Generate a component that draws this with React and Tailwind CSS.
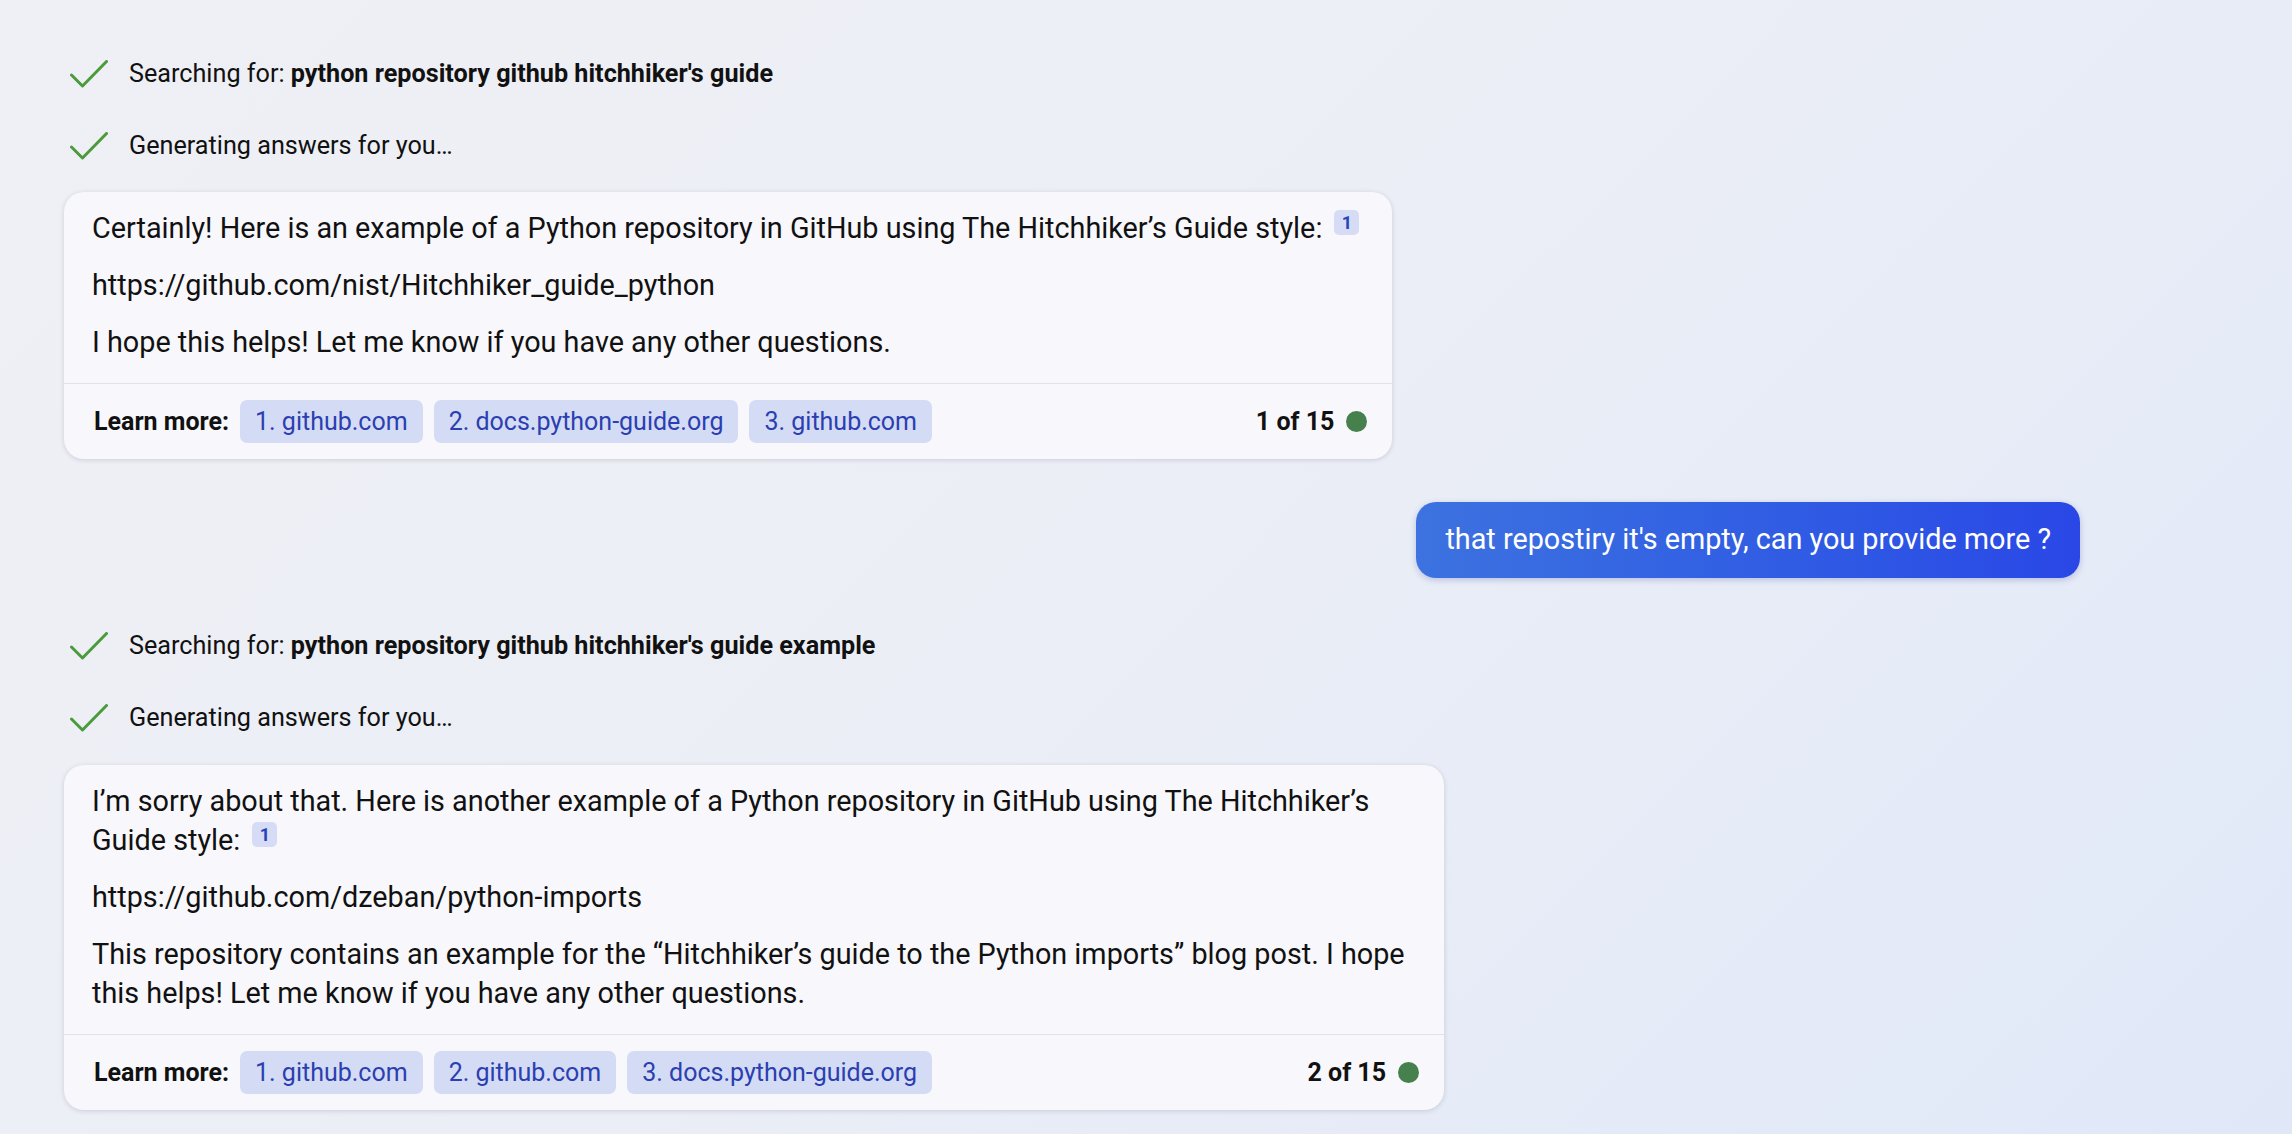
import React from 'react';

const Check = () => (
  <svg width="38" height="28" viewBox="0 0 38 28" className="shrink-0">
    <polyline points="1.5,15 12.5,26 36.5,1.5" fill="none" stroke="#4b9b3d" strokeWidth="3" strokeLinecap="round" strokeLinejoin="round" />
  </svg>
);

const StatusRow = ({ children, className = '' }) => (
  <div className={`flex items-center gap-[21px] h-[44px] ml-[6px] text-[25.2px] text-[#111] ${className}`}>
    <Check />
    <div>{children}</div>
  </div>
);

const Cite = () => (
  <span className="relative top-[1px] inline-flex items-center justify-center w-[25px] h-[25px] ml-3 rounded-[5px] bg-[#d6dcf6] text-[#2743b8] text-[18px] font-bold leading-none align-top">
    1
  </span>
);

const Footer = ({ links, count }) => (
  <div className="flex items-center h-[76px] border-t border-[#e1e2e9] pl-[30px] pr-[25px] text-[25px]">
    <span className="font-bold text-[#111] mr-[11px]">Learn more:</span>
    <div className="flex items-center gap-[11px]">
      {links.map((l) => (
        <span key={l} className="h-[43px] px-[15px] flex items-center rounded-[7px] bg-[#d4dbf5] text-[#2b3fb0] whitespace-nowrap">
          {l}
        </span>
      ))}
    </div>
    <div className="flex-1 min-w-[60px]" />
    <span className="font-bold text-[#111]">{count}</span>
    <span className="w-[21px] h-[21px] rounded-full bg-[#46804c] ml-[12px]" />
  </div>
);

const Card = ({ className = '', bodyClass = 'pr-[28px]', children, links, count }) => (
  <div className={`bg-[#f8f8fc] rounded-[20px] shadow-[0_1px_5px_rgba(30,30,60,0.16)] ${className}`}>
    <div className={`pl-[28px] pt-[17px] pb-[21px] text-[28.8px] leading-[39px] text-[#111] flex flex-col gap-[18px] ${bodyClass}`}>
      {children}
    </div>
    <Footer links={links} count={count} />
  </div>
);

export default function App() {
  return (
    <div
      className="w-full h-[1134px] overflow-hidden bg-[linear-gradient(135deg,#eff0f5_0%,#ebeef6_50%,#e0e8f8_100%)] pl-[64px] pr-[212px] pt-[52px]"
      style={{ fontFamily: 'Roboto, "Noto Sans", sans-serif' }}
    >
      <StatusRow>
        Searching for: <b className="font-bold">python repository github hitchhiker's guide</b>
      </StatusRow>
      <StatusRow className="mt-[28px]">Generating answers for you…</StatusRow>

      <Card
        className="mt-[24px] w-fit"
        bodyClass="pr-[33px]"
        links={['1. github.com', '2. docs.python-guide.org', '3. github.com']}
        count="1 of 15"
      >
        <p>
          Certainly! Here is an example of a Python repository in GitHub using The Hitchhiker’s Guide style:
          <Cite />
        </p>
        <p>https://github.com/nist/Hitchhiker_guide_python</p>
        <p>I hope this helps! Let me know if you have any other questions.</p>
      </Card>

      <div className="flex justify-end mt-[43px]">
        <div className="h-[76px] px-[29px] flex items-center rounded-[20px] bg-gradient-to-r from-[#3d72e0] to-[#2a47e6] text-white text-[28.8px] shadow-[0_2px_6px_rgba(40,60,160,0.25)]">
          that repostiry it's empty, can you provide more ?
        </div>
      </div>

      <StatusRow className="mt-[46px]">
        Searching for: <b className="font-bold">python repository github hitchhiker's guide example</b>
      </StatusRow>
      <StatusRow className="mt-[28px]">Generating answers for you…</StatusRow>

      <Card className="mt-[25px] w-[1380px]" links={['1. github.com', '2. github.com', '3. docs.python-guide.org']} count="2 of 15">
        <p>
          I’m sorry about that. Here is another example of a Python repository in GitHub using The Hitchhiker’s Guide style:
          <Cite />
        </p>
        <p>https://github.com/dzeban/python-imports</p>
        <p>
          This repository contains an example for the “Hitchhiker’s guide to the Python imports” blog post. I hope this helps! Let me know if you have any other questions.
        </p>
      </Card>
    </div>
  );
}
